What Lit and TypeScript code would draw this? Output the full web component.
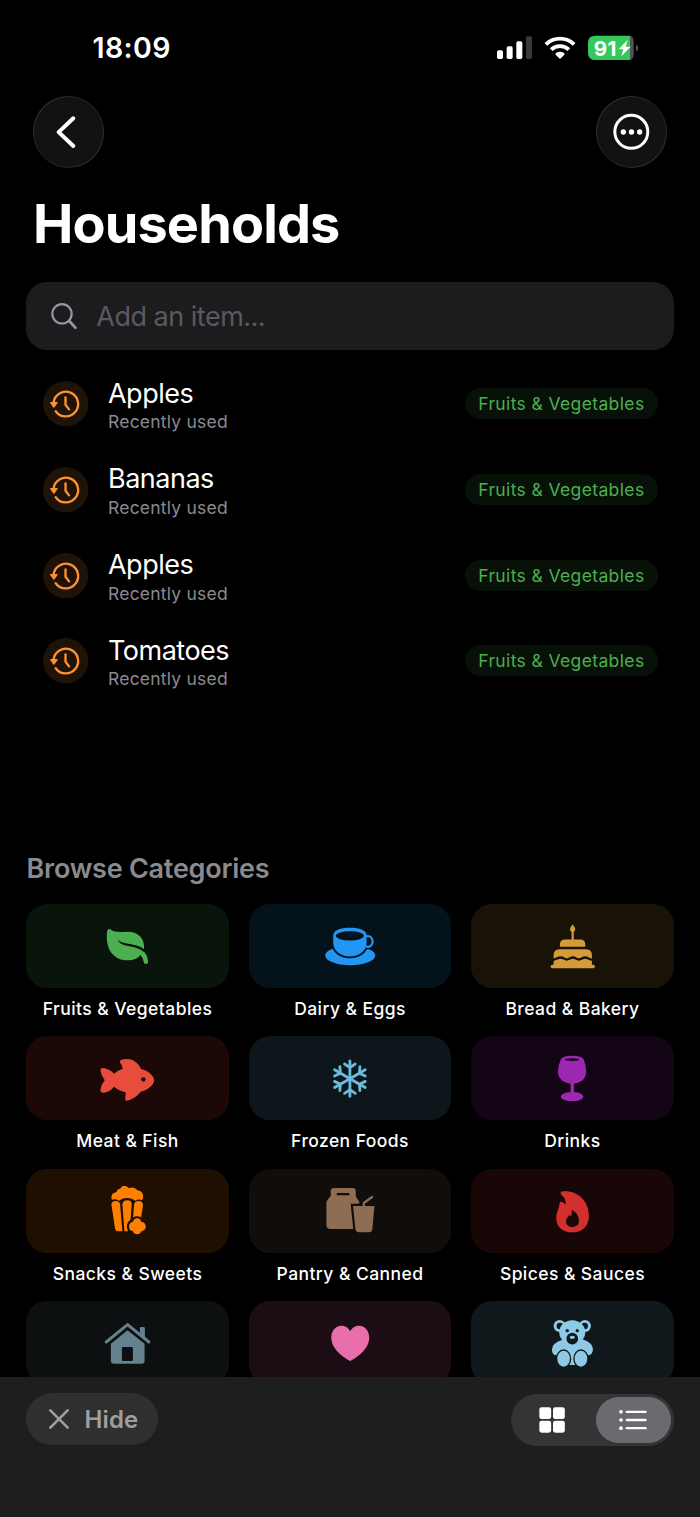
import { LitElement, html, css, svg, nothing } from "lit";
import type { SVGTemplateResult } from "lit";
import { customElement, property } from "lit/decorators.js";
import { styleMap } from "lit/directives/style-map.js";

interface Category {
  label?: string;
  ink: string;
  tile: string;
  box: string;
  art: SVGTemplateResult;
}

const SNOW_ARM = "M989 146V93M973 102L989 113L1005 102";

const CATEGORIES: Category[] = [
  {
    label: "Fruits & Vegetables", ink: "#4caf50", tile: "#09150a", box: "79 192 607 252",
    art: svg`
      <path class="ink" d="M327 267Q332 267 336 271Q345 278 385 275C415 275 436 296 433 327L430 333C440 340 445 355 445 367Q443 373 438 372Q432 372 432 366Q430 353 422 345C414 356 402 361 385 361C344 361 321 332 321 290Q321 267 327 267Z"/>
      <path class="cut" d="M354 298C362 309 378 310 400 314C415 316 425 321 436 329L432 335C420 326 408 322 398 320C375 317 359 314 354 298Z"/>`,
  },
  {
    label: "Dairy & Eggs", ink: "#2196f3", tile: "#04121c", box: "26.5 26.5 607 252",
    art: svg`
      <ellipse class="ink" cx="330" cy="181" rx="75" ry="29"/>
      <path class="cut cutline" stroke-width="11" d="M279 121C279 106 300 98 329 98S379 106 379 121V143C379 168 356 184 329 184S279 168 279 143Z"/>
      <ellipse class="cutline" cx="383" cy="139" rx="14" ry="16" stroke-width="16" fill="none"/>
      <ellipse class="line" cx="383" cy="139" rx="14" ry="16" stroke-width="7"/>
      <path class="ink" d="M279 121C279 106 300 98 329 98S379 106 379 121V143C379 168 356 184 329 184S279 168 279 143Z"/>
      <ellipse class="cut" cx="329" cy="122" rx="42" ry="14"/>`,
  },
  {
    label: "Bread & Bakery", ink: "#d49b3a", tile: "#191307", box: "33.4 26.5 607 252",
    art: svg`
      <path class="ink" d="M338 88Q346 96 346 102Q346 109 338 111Q330 109 330 102Q330 96 338 88ZM335 108H341.500V136H335Z"/>
      <path class="ink" d="M300 155V148Q300 133 316 133H360Q376 133 376 148V155Z"/>
      <path class="ink" d="M281 212V180Q281 162 299 162H378Q396 162 396 180V212Z"/>
      <path class="cutline" stroke-width="7" fill="none" d="M278 194C290 194 292 187 302 187S313 193 320 193S332 187 339 187S350 193 357 193S368 187 376 187S388 194 399 194"/>
      <rect class="ink" x="272" y="209" width="133" height="10" rx="5"/>`,
  },
  {
    label: "Meat & Fish", ink: "#e74c3c", tile: "#1c0907", box: "19 19 607 252",
    art: svg`
      <path class="ink" d="M242 122Q242 114 250 115Q270 118 283 132Q294 122 309 117Q308 105 301 99Q299 92 306 90C330 84 352 92 364 118C385 123 403 138 403 152C403 166 385 181 362 187C353 199 338 210 322 213Q316 213 316 207Q318 197 318 188Q298 184 283 171Q270 187 250 189Q242 189 242 181Q244 165 255 152Q244 138 242 122Z"/>
      <circle class="cut" cx="371" cy="149" r="6.5"/>`,
  },
  {
    label: "Frozen Foods", ink: "#6bbbdc", tile: "#0d161a", box: "686.5 18 607 252",
    art: svg`<g class="line" stroke-width="8.500">
      ${[0, 60, 120, 180, 240, 300].map((a) => svg`<path d=${SNOW_ARM} transform="rotate(${a} 989 146)"/>`)}
    </g>`,
  },
  {
    label: "Drinks", ink: "#9c27b0", tile: "#130515", box: "33.4 18 607 252",
    art: svg`
      <path class="ink" d="M303 88Q306 78 337 77.500Q367 78 371 88Q379 106 379 125C379 146 362 161 337 161S294 146 294 125Q294 106 303 88Z"/>
      <ellipse class="cut" cx="336.500" cy="89" rx="22" ry="4"/>
      <rect class="ink" x="332" y="158" width="10" height="32"/>
      <ellipse class="ink" cx="336.500" cy="200" rx="34" ry="14"/>`,
  },
  {
    label: "Snacks & Sweets", ink: "#ff8000", tile: "#1f0f00", box: "19 26 607 252",
    art: svg`
      <path class="ink" d="M276 118Q271 99 290 95Q293 85 301 85Q306 76 314 76Q322 76 328 84Q342 77 353 90Q372 92 370 112L368 119Q355 115 347 121Q335 112 322 113Q308 112 298 121Q288 115 276 118Z"/>
      <path class="ink" d="M275 132Q277 122 288 122Q299 122 301 132L308 213H296Q288 213 286 205Z"/>
      <path class="ink" d="M308 132Q310 120 322 120Q334 120 336 130L333 172L324 213H314Z"/>
      <path class="ink" d="M343 132Q345 122 357 122Q369 122 370 134L364 172H340Z"/>
      <path class="ink halo" d="M352 174Q362 174 364 184Q378 186 378 198Q378 211 366 212Q361 222 352 222Q343 222 339 212Q328 211 328 199Q328 186 340 184Q343 174 352 174Z"/>`,
  },
  {
    label: "Pantry & Canned", ink: "#8d6e55", tile: "#110d0a", box: "687 26 607 252",
    art: svg`
      <path class="ink" d="M941 83H998Q1007 83 1007 92V108L1019 127Q1016 131 1002 131V206H932Q919 206 919 195V127Q919 121 932 107V92Q932 83 941 83Z"/>
      <rect class="cut" x="950" y="98" width="38" height="7" rx="2"/>
      <path class="ink halo" d="M999 137H1063L1057 206Q1056 216 1046 216H1017Q1007 216 1006 206Z"/>
      <path class="line" stroke-width="6.500" d="M1031 137V128L1056 110"/>`,
  },
  {
    label: "Spices & Sauces", ink: "#d32f2f", tile: "#190606", box: "33.4 416 607 252",
    art: svg`
      <path class="ink" d="M308 483C350 478 387 510 387 556C387 588 366 606 338 606C308 606 289 590 289 562C289 545 299 532 299 518Q301 512 308 516Q315 520 317 524C319 510 313 500 304 493Q299 485 308 483Z"/>
      <path class="cut" d="M338 540C352 548 357 560 357 573C357 584 348 590 337 590C326 590 318 583 318 572C318 565 325 560 325 556Q328 553 333 559C336 553 335 547 335 542Q336 539 338 540Z"/>`,
  },
  {
    ink: "#64818f", tile: "#0c1011", box: "18.5 33 607 252",
    art: svg`
      <path class="ink" d="M360 136V115Q360 111 364 111H371Q375 111 375 115V150Z"/>
      <path class="line" stroke-width="9" d="M259 156L323 104L387 156"/>
      <path class="ink" d="M273 161L323 121L374 161V212Q374 221 365 221H282Q273 221 273 212Z"/>
      <rect class="cut" x="306" y="171" width="33" height="42" rx="3"/>`,
  },
  {
    ink: "#e86fab", tile: "#1c0d15", box: "686.5 33 607 252",
    art: svg`<path class="ink" d="M990 213C965 200 933 174 933 143C933 120 948 107 964 107C976 107 986 114 990 124C994 114 1004 107 1016 107C1032 107 1047 120 1047 143C1047 174 1015 200 990 213Z"/>`,
  },
  {
    ink: "#8ecae6", tile: "#11181b", box: "33.4 33 607 252",
    art: svg`
      <circle class="ink" cx="299" cy="108" r="18"/><circle class="ink" cx="375" cy="108" r="18"/>
      <circle class="cut" cx="300" cy="108" r="10"/><circle class="cut" cx="374" cy="108" r="10"/>
      <path class="ink" d="M306 148H368Q399 158 399 180Q397 195 386 196L372 188L345 225H329L300 188L288 196Q276 195 276 178Q276 160 306 150Z"/>
      <ellipse class="ink" cx="337" cy="127" rx="39" ry="36"/>
      <circle class="cut" cx="322" cy="122" r="5"/><circle class="cut" cx="352" cy="122" r="5"/>
      <circle class="cut" cx="337" cy="146" r="17.5"/>
      <ellipse class="ink" cx="337" cy="142" rx="8" ry="5"/>
      <ellipse class="ink halo thin" cx="311" cy="206" rx="19" ry="24"/>
      <ellipse class="ink halo thin" cx="363" cy="206" rx="19" ry="24"/>`,
  },
];

@customElement("category-tile")
export class CategoryTile extends LitElement {
  @property({ attribute: false }) category!: Category;

  static styles = css`
    :host { display: block; }
    .tile { height: 84px; border-radius: 21px; background: var(--tile); overflow: hidden; }
    svg { display: block; width: 100%; height: 100%; }
    .ink { fill: var(--ink); }
    .cut { fill: var(--tile); }
    .cutline { stroke: var(--tile); }
    .line { fill: none; stroke: var(--ink); stroke-linecap: round; stroke-linejoin: round; }
    .halo { stroke: var(--tile); stroke-width: 13; paint-order: stroke; }
    .thin { stroke-width: 8; }
    .label {
      margin-top: 9.8px; line-height: 22px; text-align: center; white-space: nowrap;
      font-size: 17.5px; font-weight: 500; letter-spacing: 0.43px; color: #fff;
    }
  `;

  render() {
    const c = this.category;
    return html`
      <div class="tile" style=${styleMap({ "--ink": c.ink, "--tile": c.tile })}>
        <svg viewBox=${c.box}>${c.art}</svg>
      </div>
      ${c.label ? html`<div class="label">${c.label}</div>` : nothing}`;
  }
}

@customElement("recent-row")
export class RecentRow extends LitElement {
  @property() name = "";
  @property() tag = "";

  static styles = css`
    :host { display: flex; align-items: center; height: 85.7px; padding: 0 42.5px; }
    svg { width: 45.4px; height: 45.4px; flex: none; }
    .copy { flex: 1; margin: 1.4px 0 0 20.1px; }
    .name { font-size: 27px; line-height: 34.8px; letter-spacing: -0.5px; color: #fff; }
    .note { font-size: 17.5px; line-height: 21.2px; letter-spacing: 0.22px; color: #8a8a8f; }
    .tag {
      height: 31px; line-height: 31px; padding: 0 13px; border-radius: 15.5px;
      font-size: 17.5px; letter-spacing: 0.37px; color: #4caf50; background: #071108;
    }
  `;

  render() {
    return html`
      <svg viewBox="128 333 136 136">
        <circle cx="196" cy="401" r="68" fill="#1f1207"/>
        <g fill="none" stroke="#ff9230" stroke-width="7" stroke-linecap="round" stroke-linejoin="round">
          <path d="M159.500 398A37 37 0 1 1 166 423.500"/>
          <path d="M195.500 382V404L206 418"/>
        </g>
        <path d="M151 398H170L160.500 411Z" fill="#ff9230" stroke="#ff9230" stroke-width="4" stroke-linejoin="round"/>
      </svg>
      <div class="copy">
        <div class="name">${this.name}</div>
        <div class="note">Recently used</div>
      </div>
      <div class="tag">${this.tag}</div>`;
  }
}

@customElement("app-root")
export class AppRoot extends LitElement {
  static styles = css`
    :host {
      display: flex; flex-direction: column; height: 1517px; overflow: hidden;
      background: #000; color: #fff; font-family: Inter, "Liberation Sans", sans-serif;
    }
    svg { display: block; flex: none; }
    .page { height: 1377px; overflow: hidden; display: flex; flex-direction: column; }
    .page > * { flex: none; }
    .status {
      height: 96.3px; padding: 0 60px 0 92.5px;
      display: flex; justify-content: space-between;
    }
    .time { font-size: 28.5px; font-weight: 600; line-height: 95px; letter-spacing: 0.4px; }
    .signals { width: 144px; height: 27px; margin-top: 33.6px; }
    .nav { display: flex; justify-content: space-between; padding: 0 33px; }
    .round {
      box-sizing: border-box; width: 71.3px; height: 71.3px; border-radius: 50%;
      border: 1px solid transparent;
      background:
        linear-gradient(#121212, #121212) padding-box,
        linear-gradient(135deg, #3c3c3d, #1b1b1b 50%, #3c3c3d) border-box;
    }
    .round svg { width: 100%; height: 100%; }
    h1 { margin: 23.4px 0 0 33px; font-size: 54px; font-weight: 700; line-height: 66px; letter-spacing: -0.87px; }
    .search {
      display: flex; align-items: center; margin: 24.6px 26.3px 0; height: 68px;
      border-radius: 21px; background: #1c1c1e; color: #5a5a5e;
      font-size: 27px; letter-spacing: -0.5px;
    }
    .search span { padding-top: 2px; }
    .search svg { width: 30px; height: 30px; margin: 0 17.5px 0 22.5px; }
    .recents { height: 458.4px; padding-top: 11.5px; box-sizing: border-box; margin-bottom: 44px; }
    h2 { margin: 0 26.5px; font-size: 27px; font-weight: 600; line-height: 34px; letter-spacing: -0.25px; color: #8a8a8f; }
    .grid {
      display: grid; grid-template-columns: repeat(3, 1fr); gap: 16.5px 20px;
      padding: 18.2px 26.3px 0;
    }
    .toolbar {
      height: 140px; box-sizing: border-box; padding: 16px 26.3px 0; background: #1e1e1e;
      display: flex; justify-content: space-between; align-items: flex-start;
    }
    .hide {
      display: flex; align-items: center; height: 52px; width: 131.7px; box-sizing: border-box;
      padding-left: 20.3px; gap: 14px; border-radius: 26px; background: #2f2f2f; color: #9f9f9f;
      font-size: 24px; font-weight: 600; letter-spacing: 0.1px;
    }
    .hide svg { width: 24px; height: 24px; }
    .segments {
      display: flex; align-items: center; width: 162.5px; height: 52px; margin-top: 1.2px; box-sizing: border-box;
      padding: 0 3px; border-radius: 26px; background: #343436;
    }
    .segment {
      flex: 1; display: flex; height: 46px; box-sizing: border-box; padding-right: 6.4px;
      border-radius: 23px; align-items: center; justify-content: center;
    }
    .segment.selected { flex: none; width: 75px; padding: 0; background: #6b6a6f; }
    .segment svg { width: 30px; height: 30px; }
  `;

  private recents = ["Apples", "Bananas", "Apples", "Tomatoes"];

  render() {
    return html`
      <div class="page">
        <div class="status">
          <div class="time">18:09</div>
          <svg class="signals" viewBox="78 100 432 81">
            <g fill="#fff">
              <rect x="81" y="149" width="18" height="26" rx="5"/>
              <rect x="110" y="137" width="18" height="38" rx="5"/>
              <rect x="139" y="122" width="18" height="53" rx="5"/>
              <path d="M270 175L257 162Q255 159 258 157Q270 149 282 157Q285 159 283 162Z"/>
            </g>
            <rect x="168" y="107" width="18" height="68" rx="5" fill="#39393b"/>
            <g fill="none" stroke="#fff" stroke-width="11.5">
              <path d="M227.500 131A61 61 0 0 1 312.500 131"/>
              <path d="M243.500 147A38 38 0 0 1 296.500 147"/>
            </g>
            <path d="M480 105Q491 108 491 124V160Q491 175 480 178Z" fill="#545456"/>
            <path d="M376 105H480V178H376Q354 178 354 156V127Q354 105 376 105Z" fill="#34c759"/>
            <path d="M498 132Q505 134 505 142T498 152Z" fill="#545456"/>
            <path d="M473 117L446 146H460L454 167L482 138H467Z" fill="#fff"/>
            <text x="371" y="165" font-family="Inter" font-weight="700" font-size="62" letter-spacing="1.5" fill="#fff">91</text>
          </svg>
        </div>
        <div class="nav">
          <div class="round">
            <svg viewBox="102 292 208 208"><path d="M220 356L176 397.500L220 439" fill="none" stroke="#fff" stroke-width="12" stroke-linecap="round" stroke-linejoin="round"/></svg>
          </div>
          <div class="round">
            <svg viewBox="381 291.500 208 208">
              <circle cx="484" cy="396" r="49.500" fill="none" stroke="#fff" stroke-width="9"/>
              <g fill="#fff"><circle cx="460" cy="396.500" r="8"/><circle cx="484.500" cy="396.500" r="8"/><circle cx="509" cy="396.500" r="8"/></g>
            </svg>
          </div>
        </div>
        <h1>Households</h1>
        <div class="search">
          <svg viewBox="147 93 90 90">
            <g fill="none" stroke="#98989f" stroke-linecap="round">
              <circle cx="186" cy="131.500" r="29" stroke-width="6.500"/>
              <path d="M208 153L226 173" stroke-width="8.500"/>
            </g>
          </svg>
          <span>Add an item...</span>
        </div>
        <div class="recents">
          ${this.recents.map((n) => html`<recent-row name=${n} tag="Fruits &amp; Vegetables"></recent-row>`)}
        </div>
        <h2>Browse Categories</h2>
        <div class="grid">
          ${CATEGORIES.map((c) => html`<category-tile .category=${c}></category-tile>`)}
        </div>
      </div>
      <div class="toolbar">
        <div class="hide">
          <svg viewBox="79 351 72 72"><path d="M89 361L141 413M141 361L89 413" stroke="#9f9f9f" stroke-width="8" stroke-linecap="round"/></svg>
          <span>Hide</span>
        </div>
        <div class="segments">
          <div class="segment">
            <svg viewBox="230 345.500 90 90" fill="#fff">
              <rect x="237" y="352" width="35.500" height="35.500" rx="7"/><rect x="278" y="352" width="35.500" height="35.500" rx="7"/>
              <rect x="237" y="393" width="35.500" height="35.500" rx="7"/><rect x="278" y="393" width="35.500" height="35.500" rx="7"/>
            </svg>
          </div>
          <div class="segment selected">
            <svg viewBox="475 345.500 90 90" fill="#fff">
              ${[366, 390.5, 415].map((y) => svg`<circle cx="484" cy=${y} r="5.500"/><rect x="498" y=${y - 3.5} width="63" height="7" rx="3.500"/>`)}
            </svg>
          </div>
        </div>
      </div>`;
  }
}
